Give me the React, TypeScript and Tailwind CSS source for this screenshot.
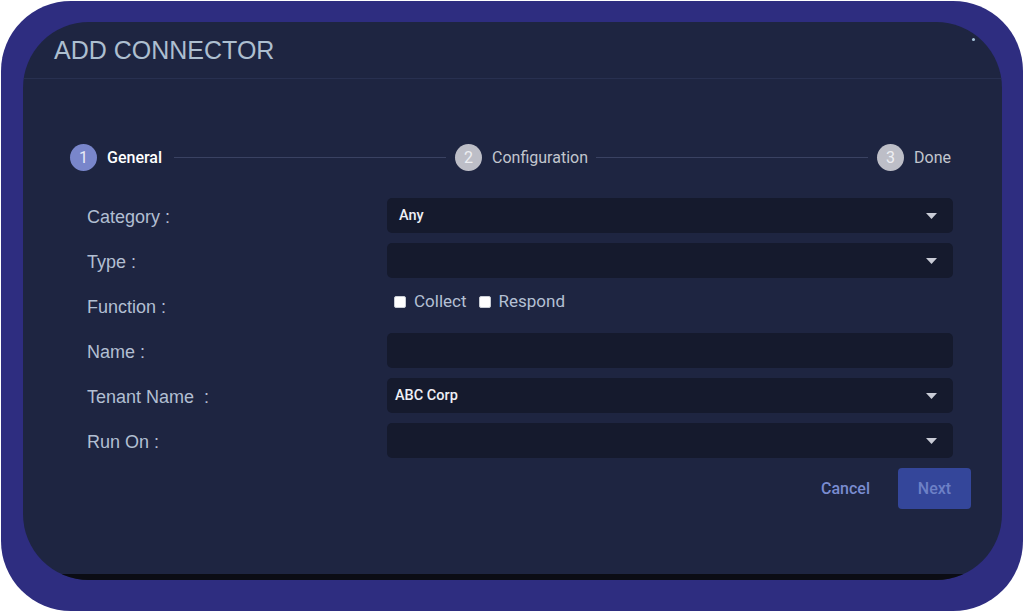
import type { ReactNode } from 'react'

const roboto = { fontFamily: 'Roboto, "Noto Sans", sans-serif' }
const arial = { fontFamily: '"Liberation Sans", Arial, sans-serif' }

function Caret() {
  return (
    <svg width="11" height="6" viewBox="0 0 11 6" className="shrink-0">
      <polygon points="0,0 11,0 5.5,6" fill="#c9ccd6" />
    </svg>
  )
}

function Field({ value, select = true, tight = false }: { value?: string; select?: boolean; tight?: boolean }) {
  return (
    <div
      className={`flex h-[35px] items-center justify-between rounded-[5px] bg-[#151a2d] pr-[16px] ${tight ? 'pl-[8px]' : 'pl-[12px]'}`}
    >
      <span className="text-[14.5px] font-medium text-[#eef0f6]" style={roboto}>
        {value}
      </span>
      {select && <Caret />}
    </div>
  )
}

function Box({ label }: { label: string }) {
  return (
    <label className="flex items-center gap-[8px]">
      <span className="block h-[12px] w-[12px] rounded-[2px] border border-[#c8ccd4] bg-white" />
      <span className="text-[17px] text-[#b4c0d4]" style={roboto}>
        {label}
      </span>
    </label>
  )
}

function Row({ label, children, top = false }: { label: string; children: ReactNode; top?: boolean }) {
  return (
    <>
      <div className="flex h-[35px] items-center pt-[3px] text-[18px] whitespace-pre text-[#b2bfd2]" style={arial}>
        {label}
      </div>
      <div className={top ? 'h-[35px]' : ''}>{children}</div>
    </>
  )
}

function Step({ n, label, active = false }: { n: number; label: string; active?: boolean }) {
  return (
    <div className="flex shrink-0 items-center gap-[10px]" style={roboto}>
      <div
        className={`flex h-[27px] w-[27px] items-center justify-center rounded-full text-[16px] ${
          active ? 'bg-[#7986cb] text-[#e8ebf7]' : 'bg-[#bdbec7] text-[#eeeff3]'
        }`}
      >
        {n}
      </div>
      <span className={`text-[16px] ${active ? 'font-medium text-white' : 'text-[#c2c6ce]'}`}>{label}</span>
    </div>
  )
}

export default function App() {
  return (
    <div className="h-[612px] w-[1024px] bg-white p-[1px]">
      <div className="h-full rounded-[70px] bg-[#2e2d80] pt-[21px] pr-[21px] pb-[31px] pl-[22px]">
        <div className="relative flex h-full flex-col overflow-hidden rounded-[66px] bg-[#1e2541]">
          {/* header */}
          <div className="flex h-[57px] shrink-0 items-center border-b border-[#283050] pt-[2px] pl-[31px]">
            <h1 className="text-[25px] text-[#adbfd0]" style={arial}>
              ADD CONNECTOR
            </h1>
          </div>
          <span className="absolute top-[16px] left-[949px] h-[3px] w-[3px] rounded-full bg-[#a9c6de]" />

          {/* stepper */}
          <div className="flex items-center pt-[65px] pr-[51px] pl-[47px]">
            <Step n={1} label="General" active />
            <div className="mr-[9px] ml-[12px] h-px flex-1 bg-[#3a4262]" />
            <Step n={2} label="Configuration" />
            <div className="mr-[9px] ml-[8px] h-px flex-1 bg-[#3a4262]" />
            <Step n={3} label="Done" />
          </div>

          {/* form */}
          <div className="mt-[27px] grid grid-cols-[300px_1fr] gap-y-[10px] pr-[49px] pl-[64px]">
            <Row label="Category :">
              <Field value="Any" />
            </Row>
            <Row label="Type :">
              <Field />
            </Row>
            <Row label="Function :" top>
              <div className="flex items-center gap-[12px] pt-[1px] pl-[7px]">
                <Box label="Collect" />
                <Box label="Respond" />
              </div>
            </Row>
            <Row label="Name :">
              <Field select={false} />
            </Row>
            <Row label="Tenant Name  :">
              <Field value="ABC Corp" tight />
            </Row>
            <Row label="Run On :">
              <Field />
            </Row>
          </div>

          <div className="mt-[10px] flex items-center justify-end gap-[28px] pr-[31px]" style={roboto}>
            <button className="text-[16px] font-medium text-[#7a8cd0]">Cancel</button>
            <button className="h-[41px] w-[73px] rounded-[4px] bg-[#34469a] text-[16px] font-medium text-[#6d80c6]">
              Next
            </button>
          </div>

          <div className="flex-1" />
          <div className="h-[6px] shrink-0 bg-[#0b0c14]" />
        </div>
      </div>
    </div>
  )
}
